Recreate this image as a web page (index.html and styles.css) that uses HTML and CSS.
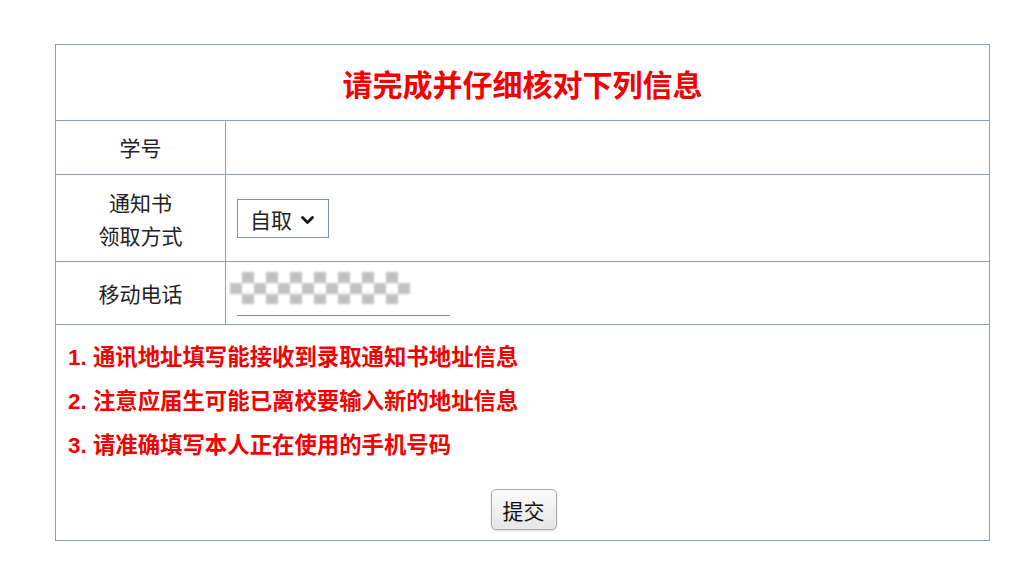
FILE: index.html
```html
<!DOCTYPE html>
<html lang="zh-CN">
<head>
<meta charset="utf-8">
<title>信息核对</title>
<link rel="stylesheet" href="styles.css">
</head>
<body>
<div class="page">
  <table class="info">
    <tr class="row-title">
      <td colspan="2" class="title">请完成并仔细核对下列信息</td>
    </tr>
    <tr class="row-id">
      <td class="label">学号</td>
      <td class="value"></td>
    </tr>
    <tr class="row-pick">
      <td class="label">通知书<br>领取方式</td>
      <td class="value">
        <div class="select">
          <span>自取</span>
          <svg class="chev" width="15" height="10" viewBox="0 0 15 10"><path d="M2.5 2.5 L7.5 7.5 L12.5 2.5" fill="none" stroke="#111" stroke-width="2.8" stroke-linecap="round" stroke-linejoin="round"/></svg>
        </div>
      </td>
    </tr>
    <tr class="row-phone">
      <td class="label">移动电话</td>
      <td class="value">
        <div class="phone"><div class="mask"></div></div>
      </td>
    </tr>
    <tr class="row-notes">
      <td colspan="2" class="notes">
        <p>1. 通讯地址填写能接收到录取通知书地址信息</p>
        <p>2. 注意应届生可能已离校要输入新的地址信息</p>
        <p>3. 请准确填写本人正在使用的手机号码</p>
        <div class="actions"><button class="submit" type="button">提交</button></div>
      </td>
    </tr>
  </table>
</div>
</body>
</html>
```
FILE: styles.css
```css
html, body {
  margin: 0;
  padding: 0;
  background: #fff;
}
body {
  font-family: "Noto Sans CJK SC", "Liberation Sans", sans-serif;
  color: #222;
}
.page {
  padding: 44px 0 0 55px;
}
.info {
  width: 935px;
  border-collapse: collapse;
  border: 1px solid #8c9fb2;
}
.info td {
  border: 1px solid #8c9fb2;
  padding: 0;
}
.title {
  height: 75px;
  text-align: center;
  color: #f40000;
  font-weight: bold;
  font-size: 30px;
  line-height: 36px;
}
.label {
  width: 169px;
  text-align: center;
  font-size: 21px;
  line-height: 33px;
}
.row-id td { height: 53px; }
.row-pick td { height: 84px; }
.row-phone td { height: 62px; }
.value {
  padding-left: 11px !important;
  vertical-align: middle;
}
.row-pick .label { padding-top: 2px; }
.select {
  display: inline-flex;
  align-items: center;
  gap: 8px;
  height: 37px;
  width: 90px;
  box-sizing: content-box;
  border: 1px solid #7f93a6;
  padding: 0;
  margin-top: 1px;
  font-size: 21px;
  color: #222;
}
.select span {
  padding-left: 12px;
}
.chev { display: block; margin-top: 2px; }
.phone {
  width: 213px;
  height: 45px;
  border-bottom: 1px solid #7f93a6;
  box-sizing: border-box;
  display: flex;
  align-items: flex-start;
  padding-top: 1px;
}
.mask {
  width: 180px;
  height: 32px;
  margin-left: -7px;
  background: repeating-conic-gradient(#bcbcbc 0 25%, #fff 0 50%) 0 0 / 24px 22px;
  filter: blur(1.2px);
  opacity: 0.9;
}
.notes {
  padding: 11px 12px 10px 12px !important;
  color: #f40000;
  font-weight: bold;
  font-size: 22.4px;
  font-family: "Liberation Sans", "Noto Sans CJK SC", sans-serif;
}
.notes p {
  margin: 0;
  line-height: 44px;
}
.actions {
  display: flex;
  justify-content: center;
  margin-top: 21px;
}
.submit {
  width: 66px;
  height: 41px;
  font-family: "Noto Sans CJK SC", sans-serif;
  font-size: 21px;
  color: #111;
  background: linear-gradient(#fbfbfb, #e6e6e6);
  border: 1px solid #a9a9a9;
  border-radius: 5px;
  padding: 0;
  margin-left: 2px;
  box-shadow: 0 1px 2px rgba(0,0,0,0.15);
}
```
